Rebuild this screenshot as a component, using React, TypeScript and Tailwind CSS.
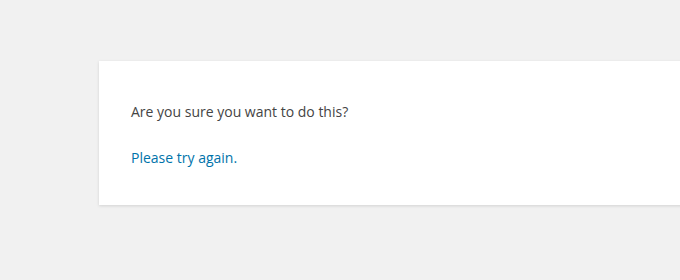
export default function App() {
  return (
    <div className="w-[680px] h-[280px] overflow-hidden bg-[#f1f1f1] pt-[61px] pl-[99px] font-['Open_Sans',sans-serif]">
      <div className="w-[764px] bg-white px-8 pt-[15px] pb-[17px] text-[14px] leading-[21px] text-[#444] shadow-[0_1px_3px_rgba(0,0,0,0.13)]">
        <p className="mt-[25px] mb-5">Are you sure you want to do this?</p>
        <p className="mt-[25px] mb-5">
          <a href="#" className="text-[#0073aa]">Please try again.</a>
        </p>
      </div>
    </div>
  )
}
